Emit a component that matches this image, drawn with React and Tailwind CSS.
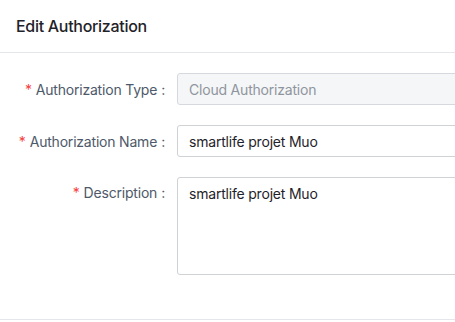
export default function App() {
  const font = { fontFamily: 'Inter, "Noto Sans", sans-serif' };
  const Label = ({ children, top }) => (
    <div className={`w-[165px] shrink-0 flex justify-end text-[14px] tracking-[-0.2px] text-[#4e5969] ${top ? 'items-start pt-[5px] leading-[22px]' : 'items-center h-[32px]'}`}>
      <span className="text-[#f53f3f] mr-[4px]">*</span>
      <span>{children}</span>
      <span className="ml-[4px]">:</span>
    </div>
  );
  return (
    <div className="w-[455px] h-[322px] overflow-hidden bg-white" style={font}>
      <div className="h-[53px] border-b border-[#e5e6eb] flex items-center pl-[16px] pb-[1px]">
        <span className="text-[16px] font-medium tracking-[-0.3px] text-[#1f2329]">Edit Authorization</span>
      </div>
      <div className="pt-[20px] flex flex-col gap-[20px] h-[267px] border-b border-[#e5e6eb]">
        <div className="flex gap-[12px]">
          <Label>Authorization Type</Label>
          <div className="w-[320px] shrink-0 h-[32px] rounded-[3px] border border-[#d5d8de] bg-[#f5f6f7] flex items-center px-[11px] text-[14px] tracking-[-0.2px] text-[#8f959e]">
            Cloud Authorization
          </div>
        </div>
        <div className="flex gap-[12px]">
          <Label>Authorization Name</Label>
          <div className="w-[320px] shrink-0 h-[32px] rounded-[3px] border border-[#d0d3d6] bg-white flex items-center px-[11px] text-[14px] tracking-[-0.2px] text-[#1f2329]">
            smartlife projet Muo
          </div>
        </div>
        <div className="flex gap-[12px]">
          <Label top>Description</Label>
          <div className="w-[320px] shrink-0 h-[98px] rounded-[3px] border border-[#d0d3d6] bg-white px-[11px] pt-[5px] leading-[22px] text-[14px] tracking-[-0.2px] text-[#1f2329]">
            smartlife projet Muo
          </div>
        </div>
      </div>
    </div>
  );
}
